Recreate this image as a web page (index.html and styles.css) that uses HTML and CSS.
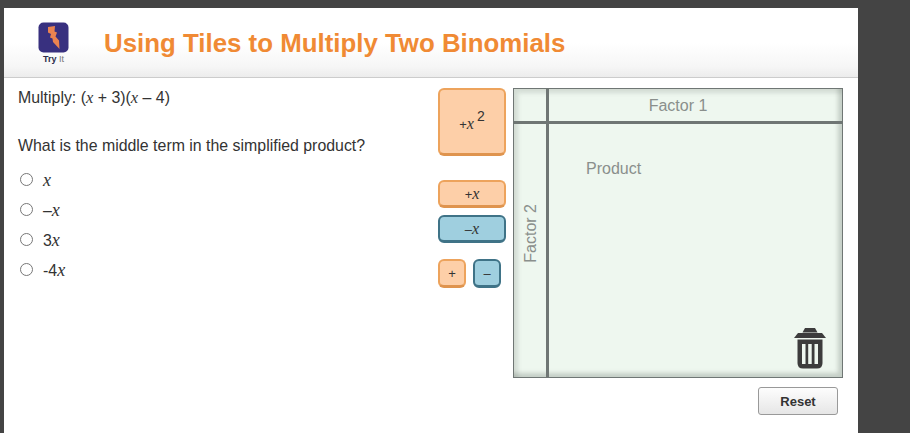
FILE: index.html
```html
<!DOCTYPE html>
<html lang="en">
<head>
  <meta charset="UTF-8">
  <title>Using Tiles to Multiply Two Binomials</title>
  <link rel="stylesheet" href="styles.css">
</head>
<body>
  <div class="panel">
    <div class="header">
      <div class="logo">
        <svg class="logo-icon" width="32" height="31" viewBox="0 0 32 31">
          <rect x="0.5" y="0.5" width="30" height="30" rx="5" fill="#38307f"/>
          <path d="M10 5 L17 4 L16.5 9.5 L19 10.5 L17.5 14.5 L21 18.5 L21.5 27 L15 20 L14.5 16.5 L12 15.5 L13 12 L10 10.5 Z" fill="#ea8350"/>
        </svg>
        <div class="logo-text"><b>Try</b> It</div>
      </div>
      <h1>Using Tiles to Multiply Two Binomials</h1>
    </div>

    <div class="content">
      <div class="question">
        <p class="prompt">Multiply: (<i>x</i> + 3)(<i>x</i> – 4)</p>
        <p class="prompt ask">What is the middle term in the simplified product?</p>
        <div class="choices">
          <label class="choice"><span class="radio"></span><span class="choice-text"><i>x</i></span></label>
          <label class="choice"><span class="radio"></span><span class="choice-text">–<i>x</i></span></label>
          <label class="choice"><span class="radio"></span><span class="choice-text">3<i>x</i></span></label>
          <label class="choice"><span class="radio"></span><span class="choice-text">-4<i>x</i></span></label>
        </div>
      </div>

      <div class="tiles">
        <div class="tile orange big"><span>+<i>x</i><sup>2</sup></span></div>
        <div class="tile orange wide first-wide"><span>+<i>x</i></span></div>
        <div class="tile blue wide"><span>–<i>x</i></span></div>
        <div class="small-row">
          <div class="tile orange small">+</div>
          <div class="tile blue small">–</div>
        </div>
      </div>

      <div class="right">
        <div class="board">
          <div class="cell corner"></div>
          <div class="cell factor1"><span>Factor 1</span></div>
          <div class="cell factor2"><span>Factor 2</span></div>
          <div class="cell product">Product</div>
          <svg class="trash" width="36" height="42" viewBox="0 0 36 42">
            <path d="M13 1 H23 L25.5 5.5 H10.5 Z" fill="#3c3c3c"/>
            <path d="M6 6 H30 L34 11 H2 Z" fill="#3c3c3c"/>
            <path d="M5.5 12.5 H30.5 V36 Q30.5 41.5 25 41.5 H11 Q5.5 41.5 5.5 36 Z" fill="#3c3c3c"/>
            <rect x="10" y="17" width="3.5" height="20" fill="#eef7ef"/>
            <rect x="16.2" y="17" width="3.5" height="20" fill="#eef7ef"/>
            <rect x="22.5" y="17" width="3.5" height="20" fill="#eef7ef"/>
          </svg>
        </div>
        <div class="actions">
          <button class="reset">Reset</button>
        </div>
      </div>
    </div>
  </div>
</body>
</html>
```

FILE: styles.css
```css
html, body {
  height: 100%;
}
body {
  margin: 0;
  padding: 8px 52px 0 4px;
  box-sizing: border-box;
  background-color: #444;
  font-family: "Liberation Sans", Arial, sans-serif;
  overflow: hidden;
}
.panel {
  background-color: #fff;
  height: 425px;
}
.header {
  display: flex;
  align-items: center;
  height: 69px;
  border-bottom: 1px solid #ccc;
  background: linear-gradient(to bottom, #fff 0%, #fff 50%, #f6f6f6 85%, #ececec 100%);
}
.logo {
  width: 100px;
  display: flex;
  flex-direction: column;
  align-items: center;
  margin-top: 1px;
}
.logo-icon {
  display: block;
  margin-right: 1px;
}
.logo-text {
  font-size: 9px;
  line-height: 10px;
  margin-top: 1px;
  margin-right: 1px;
  color: #777;
}
.logo-text b {
  color: #2c2c4a;
}
.header h1 {
  margin: 2px 0 0;
  font-size: 25.85px;
  font-weight: bold;
  color: #f08a34;
}
.content {
  display: flex;
}
.question {
  width: 420px;
  padding: 10px 0 0 14px;
  color: #333;
  font-size: 15.9px;
}
.prompt {
  margin: 0;
  line-height: 20px;
}
.prompt i, .choice i {
  font-family: "Liberation Serif", "Times New Roman", serif;
  font-size: 16.5px;
}
.choice i {
  font-size: 18px;
  line-height: 1;
}
.choice-text {
  line-height: 18px;
  margin-bottom: 1px;
}
.ask {
  margin-top: 28px;
}
.choices {
  margin-top: 10px;
}
.choice {
  display: flex;
  align-items: center;
  gap: 10px;
  height: 30px;
}
.radio {
  width: 11px;
  height: 11px;
  margin: 0 0 4px 2px;
  border: 1px solid #777;
  border-radius: 50%;
  background-color: #fff;
}
.tiles {
  width: 75px;
  padding-top: 10px;
}
.tile {
  display: flex;
  align-items: center;
  justify-content: center;
  box-sizing: border-box;
  border-radius: 6px;
  color: #333;
  font-size: 13px;
}
.tile span {
  padding-top: 1px;
}
.tile i {
  font-family: "Liberation Serif", "Times New Roman", serif;
  font-size: 16px;
}
.orange {
  background-color: #fdcfa8;
  border: 2px solid #eda35c;
  border-bottom: 3px solid #df944e;
}
.blue {
  background-color: #9fcfdf;
  border: 2px solid #3f7387;
  border-bottom: 3px solid #3f7387;
}
.big {
  width: 68px;
  height: 68px;
}
.big span {
  padding-top: 5px;
}
.big sup {
  font-size: 14px;
  line-height: 0;
  margin-left: 3px;
  vertical-align: 8px;
}
.wide {
  width: 68px;
  height: 28px;
  margin-top: 7px;
}
.first-wide {
  margin-top: 24px;
}
.small-row {
  display: flex;
  gap: 7px;
  margin-top: 16px;
}
.small {
  width: 28px;
  height: 29px;
}
.right {
  width: 330px;
  padding-top: 10px;
}
.board {
  position: relative;
  display: grid;
  grid-template-columns: 35px 1fr;
  grid-template-rows: 35px 1fr;
  height: 290px;
  box-sizing: border-box;
  border: 1px solid #6f7674;
  background-color: #eef7ef;
  box-shadow: inset -4px -4px 4px rgba(90, 100, 95, 0.28), inset 4px 4px 4px rgba(90, 100, 95, 0.18);
  color: #8a8f8c;
  font-size: 16px;
}
.corner {
  border-right: 3px solid #6f7674;
  border-bottom: 3px solid #6f7674;
}
.factor1 {
  border-bottom: 3px solid #6f7674;
  display: flex;
  align-items: center;
  justify-content: center;
}
.factor1 span {
  margin: 2px 35px 0 0;
}
.factor2 {
  border-right: 3px solid #6f7674;
  display: flex;
  align-items: center;
  justify-content: center;
}
.factor2 span {
  writing-mode: vertical-rl;
  transform: rotate(180deg);
  margin: 0 0 34px 2px;
}
.product {
  padding: 36px 0 0 37px;
}
.trash {
  position: absolute;
  right: 14px;
  bottom: 8px;
}
.actions {
  display: flex;
  justify-content: flex-end;
  padding: 9px 5px 0 0;
}
.reset {
  width: 80px;
  height: 28px;
  padding: 0;
  border: 1px solid #999;
  border-radius: 3px;
  background: linear-gradient(to bottom, #fdfdfd, #e6e6e6);
  color: #333;
  font-family: "Liberation Sans", Arial, sans-serif;
  font-size: 13px;
  font-weight: bold;
}
```
